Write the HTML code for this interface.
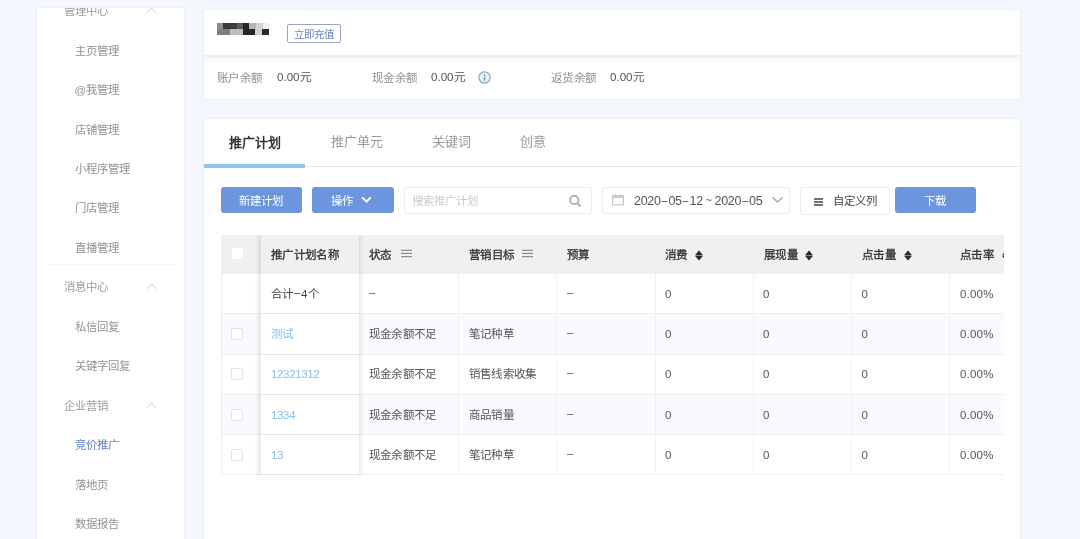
<!DOCTYPE html>
<html lang="zh-CN">
<head>
<meta charset="utf-8">
<style>
*{margin:0;padding:0;box-sizing:border-box;}
html,body{width:1080px;height:539px;overflow:hidden;background:#f4f7fe;font-family:"Liberation Sans",sans-serif;}
.abs{position:absolute;}
.t{position:absolute;white-space:nowrap;line-height:1;}
/* sidebar */
#side{position:absolute;left:37px;top:8px;width:147px;height:540px;background:#fff;overflow:hidden;box-shadow:0 0 4px rgba(0,0,0,0.07);}
.sh{color:#9a9a9a;font-size:11.4px;}
.si{color:#939393;font-size:11.4px;}
.chev{position:absolute;width:7px;height:7px;border-left:1px solid #dcdcdc;border-top:1px solid #dcdcdc;transform:rotate(45deg);}
/* cards */
.card{position:absolute;background:#fff;border-radius:3px;box-shadow:0 0 3px rgba(0,0,0,0.07);}
.btn{position:absolute;background:#6b95dc;border-radius:3px;color:#fff;font-size:12px;text-align:center;}
.inp{position:absolute;border:1px solid #ebebeb;border-radius:3px;background:#fff;}
/* table */
.th{position:absolute;top:235px;height:39px;background:#f0f0f0;}
.row{position:absolute;left:221px;width:783px;height:40px;border-bottom:1px solid #ececec;}
.cell{position:absolute;font-size:11.5px;letter-spacing:0.2px;color:#555;line-height:1;white-space:nowrap;}
.hd{font-weight:normal;color:#333;font-size:11.5px;letter-spacing:0.35px;-webkit-text-stroke:0.3px #333;}
.vl{position:absolute;width:1px;background:#eeeeee;}
.cb{position:absolute;width:12px;height:12px;border:1px solid #e2e2e2;border-radius:2px;background:#fff;}
.lnk{color:#86c0ec;}
.dsh{position:relative;top:-2px;margin:0 0.5px;}
.dsh2{position:relative;top:-2px;}
.tl{display:inline-block;font-size:11px;margin:0 3px 0 2.5px;position:relative;top:-1px;}
.dd{position:relative;top:-0.5px;margin:0 0.6px;display:inline-block;transform:scaleX(0.85);}
</style>
</head>
<body><div style="position:absolute;left:0;top:0;width:1080px;height:539px;will-change:transform;">
<!-- sidebar -->
<div id="side">
<div class="t sh" style="left:26.5px;top:-2.5px;">管理中心</div>
<div class="chev" style="left:111px;top:1px;"></div>
<div class="t si" style="left:37.5px;top:38px;">主页管理</div>
<div class="t si" style="left:37.5px;top:77px;">@我管理</div>
<div class="t si" style="left:37.5px;top:117px;">店铺管理</div>
<div class="t si" style="left:37.5px;top:156px;">小程序管理</div>
<div class="t si" style="left:37.5px;top:195px;">门店管理</div>
<div class="t si" style="left:37.5px;top:235px;">直播管理</div>
<div class="abs" style="left:11px;top:256px;width:129px;height:1px;background:#f6f6f6;"></div>
<div class="t sh" style="left:26.5px;top:274px;">消息中心</div>
<div class="chev" style="left:111px;top:277px;"></div>
<div class="t si" style="left:37.5px;top:314px;">私信回复</div>
<div class="t si" style="left:37.5px;top:353px;">关键字回复</div>
<div class="t sh" style="left:26.5px;top:393px;">企业营销</div>
<div class="chev" style="left:111px;top:396px;"></div>
<div class="t si" style="left:37.5px;top:432px;color:#5b7fc7;">竞价推广</div>
<div class="t si" style="left:37.5px;top:472px;">落地页</div>
<div class="t si" style="left:37.5px;top:511px;">数据报告</div>
</div>
<!-- header card -->
<div class="card" style="left:204px;top:10px;width:816px;height:88.7px;"></div>
<div class="abs" style="left:204px;top:55px;width:816px;height:1.5px;background:#ededed;"></div>
<div class="abs" style="left:204px;top:56.5px;width:816px;height:6px;background:linear-gradient(#f6f6f6,#fdfdfd 70%,#fff);"></div>
<div class="abs" style="left:217px;top:23px;width:6px;height:6px;background:#8c8c8c;"></div><div class="abs" style="left:223px;top:23px;width:14px;height:6px;background:#3a3a3a;"></div><div class="abs" style="left:237px;top:23px;width:6px;height:6px;background:#5c5c5c;"></div><div class="abs" style="left:243px;top:23px;width:6px;height:6px;background:#262626;"></div><div class="abs" style="left:249px;top:23px;width:7px;height:6px;background:#b5b5b5;"></div><div class="abs" style="left:256px;top:23px;width:7px;height:6px;background:#d2d2d2;"></div><div class="abs" style="left:263px;top:23px;width:6px;height:6px;background:#f0f0f0;"></div><div class="abs" style="left:217px;top:29px;width:13px;height:6px;background:#808080;"></div><div class="abs" style="left:230px;top:29px;width:13px;height:6px;background:#bdbdbd;"></div><div class="abs" style="left:243px;top:29px;width:12px;height:6px;background:#242424;"></div><div class="abs" style="left:255px;top:29px;width:7px;height:6px;background:#cfcfcf;"></div><div class="abs" style="left:262px;top:29px;width:7px;height:6px;background:#2a2a2a;"></div>
<div class="abs" style="left:287px;top:24px;width:54px;height:19px;border:1px solid #9aa6c2;border-radius:2px;"></div>
<div class="t" style="left:294px;top:28.5px;font-size:10.5px;color:#6a84bd;">立即充值</div>
<div class="t" style="left:216.5px;top:73px;font-size:11.5px;letter-spacing:0.6px;color:#909090;">账户余额</div>
<div class="t" style="left:277px;top:71px;font-size:11.6px;color:#555;">0.00元</div>
<div class="t" style="left:371.5px;top:73px;font-size:11.5px;letter-spacing:0.6px;color:#909090;">现金余额</div>
<div class="t" style="left:431px;top:71px;font-size:11.6px;color:#555;">0.00元</div>
<svg class="abs" style="left:477.5px;top:70.5px;" width="13" height="13" viewBox="0 0 13 13"><circle cx="6.5" cy="6.5" r="5.6" fill="#e6f2fa" stroke="#86aac4" stroke-width="1.2"/><circle cx="6.5" cy="3.9" r="0.85" fill="#6f93ad"/><path d="M6.5 5.6 V9.6" stroke="#6f93ad" stroke-width="1.4"/></svg>
<div class="t" style="left:550.5px;top:73px;font-size:11.5px;letter-spacing:0.6px;color:#909090;">返货余额</div>
<div class="t" style="left:610px;top:71px;font-size:11.6px;color:#555;">0.00元</div>

<!-- main card -->
<div class="card" style="left:204px;top:119px;width:816px;height:440px;"></div>
<!-- tabs -->
<div class="t" style="left:229px;top:135.5px;font-size:13px;font-weight:bold;color:#333;">推广计划</div>
<div class="t" style="left:331px;top:135px;font-size:13px;color:#999;">推广单元</div>
<div class="t" style="left:432px;top:135px;font-size:13px;color:#999;">关键词</div>
<div class="t" style="left:520px;top:135px;font-size:13px;color:#999;">创意</div>
<div class="abs" style="left:204px;top:166px;width:816px;height:1px;background:#e8e8e8;"></div>
<div class="abs" style="left:204px;top:164px;width:101px;height:3.5px;background:#90c6ef;"></div>
<!-- toolbar -->
<div class="btn" style="left:221px;top:187px;width:81px;height:26px;"></div>
<div class="t" style="left:239px;top:195.5px;font-size:11.4px;color:#fff;">新建计划</div>
<div class="btn" style="left:312px;top:187px;width:82px;height:26px;"></div>
<div class="t" style="left:331px;top:195.5px;font-size:11.4px;color:#fff;">操作</div>
<svg class="abs" style="left:360px;top:195px;" width="13" height="9" viewBox="0 0 13 9"><path d="M2.2 2.3 L6.5 6.6 L10.8 2.3" fill="none" stroke="#fff" stroke-width="1.9"/></svg>
<div class="inp" style="left:404px;top:187px;width:188px;height:27px;"></div>
<div class="t" style="left:412px;top:196px;font-size:11.4px;color:#cbcbcb;">搜索推广计划</div>
<svg class="abs" style="left:568px;top:194px;" width="14" height="14" viewBox="0 0 14 14"><circle cx="6.3" cy="6" r="4.2" fill="none" stroke="#ababab" stroke-width="1.8"/><path d="M9.3 9.1 L12.4 12.3" stroke="#ababab" stroke-width="2"/></svg>
<div class="inp" style="left:602px;top:187px;width:188px;height:27px;"></div>
<svg class="abs" style="left:612px;top:194px;" width="12" height="12" viewBox="0 0 12 12"><rect x="0.6" y="1.6" width="10.8" height="9.3" fill="none" stroke="#c6c6c6" stroke-width="1.1"/><rect x="0.6" y="1.6" width="10.8" height="2.6" fill="#cdcdcd"/><path d="M3.5 0.3 V2 M8.5 0.3 V2" stroke="#c6c6c6" stroke-width="1.2"/></svg>
<div class="t" style="left:634px;top:195px;font-size:12.5px;letter-spacing:-0.3px;color:#555;">2020<span class="dd">–</span>05<span class="dd">–</span>12<span class="tl">~</span>2020<span class="dd">–</span>05</div>
<svg class="abs" style="left:771px;top:195px;" width="13" height="9" viewBox="0 0 13 9"><path d="M1.5 2.5 L6.5 7 L11.5 2.5" fill="none" stroke="#999" stroke-width="1.1"/></svg>
<div class="inp" style="left:800px;top:187px;width:90px;height:28px;"></div>
<svg class="abs" style="left:813px;top:197px;" width="11" height="10" viewBox="0 0 11 10"><path d="M1 2 H10 M1 5 H10 M1 8 H10" stroke="#444" stroke-width="1.6"/></svg>
<div class="t" style="left:833px;top:196px;font-size:11.4px;color:#444;">自定义列</div>
<div class="btn" style="left:895px;top:187px;width:81px;height:26px;"></div>
<div class="t" style="left:924px;top:195.5px;font-size:11.4px;color:#fff;">下载</div>
<!-- table -->
<!--TABLE-->
<div class="abs" style="left:221px;top:235px;width:783px;height:241px;overflow:hidden;">
<div class="abs" style="left:0px;top:0px;width:783px;height:39px;background:#f0f0f0;"></div>
<div class="abs" style="left:0px;top:39px;width:783px;height:40.2px;background:#ffffff;"></div>
<div class="abs" style="left:0px;top:78.2px;width:783px;height:1px;background:#eeeeee;"></div>
<div class="abs" style="left:0px;top:79.2px;width:783px;height:40.3px;background:#f9fafd;"></div>
<div class="abs" style="left:0px;top:118.5px;width:783px;height:1px;background:#eeeeee;"></div>
<div class="abs" style="left:0px;top:119.5px;width:783px;height:40.3px;background:#ffffff;"></div>
<div class="abs" style="left:0px;top:158.8px;width:783px;height:1px;background:#eeeeee;"></div>
<div class="abs" style="left:0px;top:159.8px;width:783px;height:40.3px;background:#f9fafd;"></div>
<div class="abs" style="left:0px;top:199.1px;width:783px;height:1px;background:#eeeeee;"></div>
<div class="abs" style="left:0px;top:200.1px;width:783px;height:40.2px;background:#ffffff;"></div>
<div class="abs" style="left:0px;top:239.3px;width:783px;height:1px;background:#eeeeee;"></div>
<div class="abs" style="left:237px;top:39px;width:1px;height:201px;background:#f1f1f1;"></div>
<div class="abs" style="left:335px;top:39px;width:1px;height:201px;background:#f1f1f1;"></div>
<div class="abs" style="left:434px;top:39px;width:1px;height:201px;background:#f1f1f1;"></div>
<div class="abs" style="left:532px;top:39px;width:1px;height:201px;background:#f1f1f1;"></div>
<div class="abs" style="left:630px;top:39px;width:1px;height:201px;background:#f1f1f1;"></div>
<div class="abs" style="left:728px;top:39px;width:1px;height:201px;background:#f1f1f1;"></div>
<div class="abs" style="left:0px;top:39px;width:1px;height:201px;background:#efefef;"></div>
<div class="abs" style="left:34px;top:0px;width:6px;height:239.5px;background:linear-gradient(to left,rgba(0,0,0,0.09),rgba(0,0,0,0));"></div>
<div class="abs" style="left:138px;top:0px;width:5px;height:239.5px;background:linear-gradient(to right,rgba(0,0,0,0.075),rgba(0,0,0,0));"></div>
<div class="abs" style="left:40px;top:0px;width:98px;height:39px;background:#f0f0f0;"></div>
<div class="abs" style="left:40px;top:39px;width:98px;height:40.2px;background:#fff;"></div>
<div class="abs" style="left:40px;top:78.2px;width:98px;height:1px;background:#e6e6e6;"></div>
<div class="abs" style="left:40px;top:79.2px;width:98px;height:40.3px;background:#fff;"></div>
<div class="abs" style="left:40px;top:118.5px;width:98px;height:1px;background:#e6e6e6;"></div>
<div class="abs" style="left:40px;top:119.5px;width:98px;height:40.3px;background:#fff;"></div>
<div class="abs" style="left:40px;top:158.8px;width:98px;height:1px;background:#e6e6e6;"></div>
<div class="abs" style="left:40px;top:159.8px;width:98px;height:40.3px;background:#fff;"></div>
<div class="abs" style="left:40px;top:199.1px;width:98px;height:1px;background:#e6e6e6;"></div>
<div class="abs" style="left:40px;top:200.1px;width:98px;height:40.2px;background:#fff;"></div>
<div class="abs" style="left:40px;top:239.3px;width:98px;height:1px;background:#e6e6e6;"></div>
<div class="cell hd" style="left:50px;top:14.5px;">推广计划名称</div>
<div class="cell hd" style="left:148px;top:14.5px;">状态</div>
<div class="cell hd" style="left:248px;top:14.5px;">营销目标</div>
<div class="cell hd" style="left:346px;top:14.5px;">预算</div>
<div class="cell hd" style="left:444px;top:14.5px;">消费</div>
<div class="cell hd" style="left:543px;top:14.5px;">展现量</div>
<div class="cell hd" style="left:641px;top:14.5px;">点击量</div>
<div class="cell hd" style="left:739px;top:14.5px;">点击率</div>
<svg class="abs" style="left:179.5px;top:14px;" width="12" height="9" viewBox="0 0 12 9"><path d="M0 1.3 H11 M0 4.4 H11 M0 7.7 H11" stroke="#777" stroke-width="1"/></svg>
<svg class="abs" style="left:301px;top:14px;" width="12" height="9" viewBox="0 0 12 9"><path d="M0 1.3 H11 M0 4.4 H11 M0 7.7 H11" stroke="#777" stroke-width="1"/></svg>
<svg class="abs" style="left:474px;top:14.5px;" width="8" height="11" viewBox="0 0 8 11"><path d="M0.6 5 L4 0.8 L7.4 5 Z M0.6 6 L4 10.2 L7.4 6 Z" fill="#2a2a2a" stroke="#2a2a2a" stroke-width="0.6" stroke-linejoin="round"/></svg>
<svg class="abs" style="left:584px;top:14.5px;" width="8" height="11" viewBox="0 0 8 11"><path d="M0.6 5 L4 0.8 L7.4 5 Z M0.6 6 L4 10.2 L7.4 6 Z" fill="#2a2a2a" stroke="#2a2a2a" stroke-width="0.6" stroke-linejoin="round"/></svg>
<svg class="abs" style="left:682.5px;top:14.5px;" width="8" height="11" viewBox="0 0 8 11"><path d="M0.6 5 L4 0.8 L7.4 5 Z M0.6 6 L4 10.2 L7.4 6 Z" fill="#2a2a2a" stroke="#2a2a2a" stroke-width="0.6" stroke-linejoin="round"/></svg>
<svg class="abs" style="left:780.5px;top:14.5px;" width="8" height="11" viewBox="0 0 8 11"><path d="M0.6 5 L4 0.8 L7.4 5 Z M0.6 6 L4 10.2 L7.4 6 Z" fill="#2a2a2a" stroke="#2a2a2a" stroke-width="0.6" stroke-linejoin="round"/></svg>
<div class="abs" style="left:11px;top:13px;width:11px;height:11px;background:#fff;border-radius:1px;"></div>
<div class="cell" style="left:50px;top:54px;color:#444;">合计<span class="dsh">–</span>4个</div>
<div class="cell" style="left:148px;top:54px;"><span class="dsh2">–</span></div>
<div class="cell" style="left:346px;top:54px;"><span class="dsh2">–</span></div>
<div class="cell" style="left:444px;top:54px;">0</div>
<div class="cell" style="left:542px;top:54px;">0</div>
<div class="cell" style="left:640.5px;top:54px;">0</div>
<div class="cell" style="left:739px;top:54px;">0.00%</div>
<div class="cb" style="left:10px;top:93px;"></div>
<div class="cell lnk" style="left:50px;top:94px;">测试</div>
<div class="cell" style="left:148px;top:94px;">现金余额不足</div>
<div class="cell" style="left:248px;top:94px;">笔记种草</div>
<div class="cell" style="left:346px;top:94px;"><span class="dsh2">–</span></div>
<div class="cell" style="left:444px;top:94px;">0</div>
<div class="cell" style="left:542px;top:94px;">0</div>
<div class="cell" style="left:640.5px;top:94px;">0</div>
<div class="cell" style="left:739px;top:94px;">0.00%</div>
<div class="cb" style="left:10px;top:133px;"></div>
<div class="cell lnk" style="left:50px;top:134px;letter-spacing:-0.35px;">12321312</div>
<div class="cell" style="left:148px;top:134px;">现金余额不足</div>
<div class="cell" style="left:248px;top:134px;">销售线索收集</div>
<div class="cell" style="left:346px;top:134px;"><span class="dsh2">–</span></div>
<div class="cell" style="left:444px;top:134px;">0</div>
<div class="cell" style="left:542px;top:134px;">0</div>
<div class="cell" style="left:640.5px;top:134px;">0</div>
<div class="cell" style="left:739px;top:134px;">0.00%</div>
<div class="cb" style="left:10px;top:174px;"></div>
<div class="cell lnk" style="left:50px;top:175px;letter-spacing:-0.35px;">1334</div>
<div class="cell" style="left:148px;top:175px;">现金余额不足</div>
<div class="cell" style="left:248px;top:175px;">商品销量</div>
<div class="cell" style="left:346px;top:175px;"><span class="dsh2">–</span></div>
<div class="cell" style="left:444px;top:175px;">0</div>
<div class="cell" style="left:542px;top:175px;">0</div>
<div class="cell" style="left:640.5px;top:175px;">0</div>
<div class="cell" style="left:739px;top:175px;">0.00%</div>
<div class="cb" style="left:10px;top:214px;"></div>
<div class="cell lnk" style="left:50px;top:215px;letter-spacing:-0.35px;">13</div>
<div class="cell" style="left:148px;top:215px;">现金余额不足</div>
<div class="cell" style="left:248px;top:215px;">笔记种草</div>
<div class="cell" style="left:346px;top:215px;"><span class="dsh2">–</span></div>
<div class="cell" style="left:444px;top:215px;">0</div>
<div class="cell" style="left:542px;top:215px;">0</div>
<div class="cell" style="left:640.5px;top:215px;">0</div>
<div class="cell" style="left:739px;top:215px;">0.00%</div>
</div>
<!--/TABLE-->
</div></body>
</html>
